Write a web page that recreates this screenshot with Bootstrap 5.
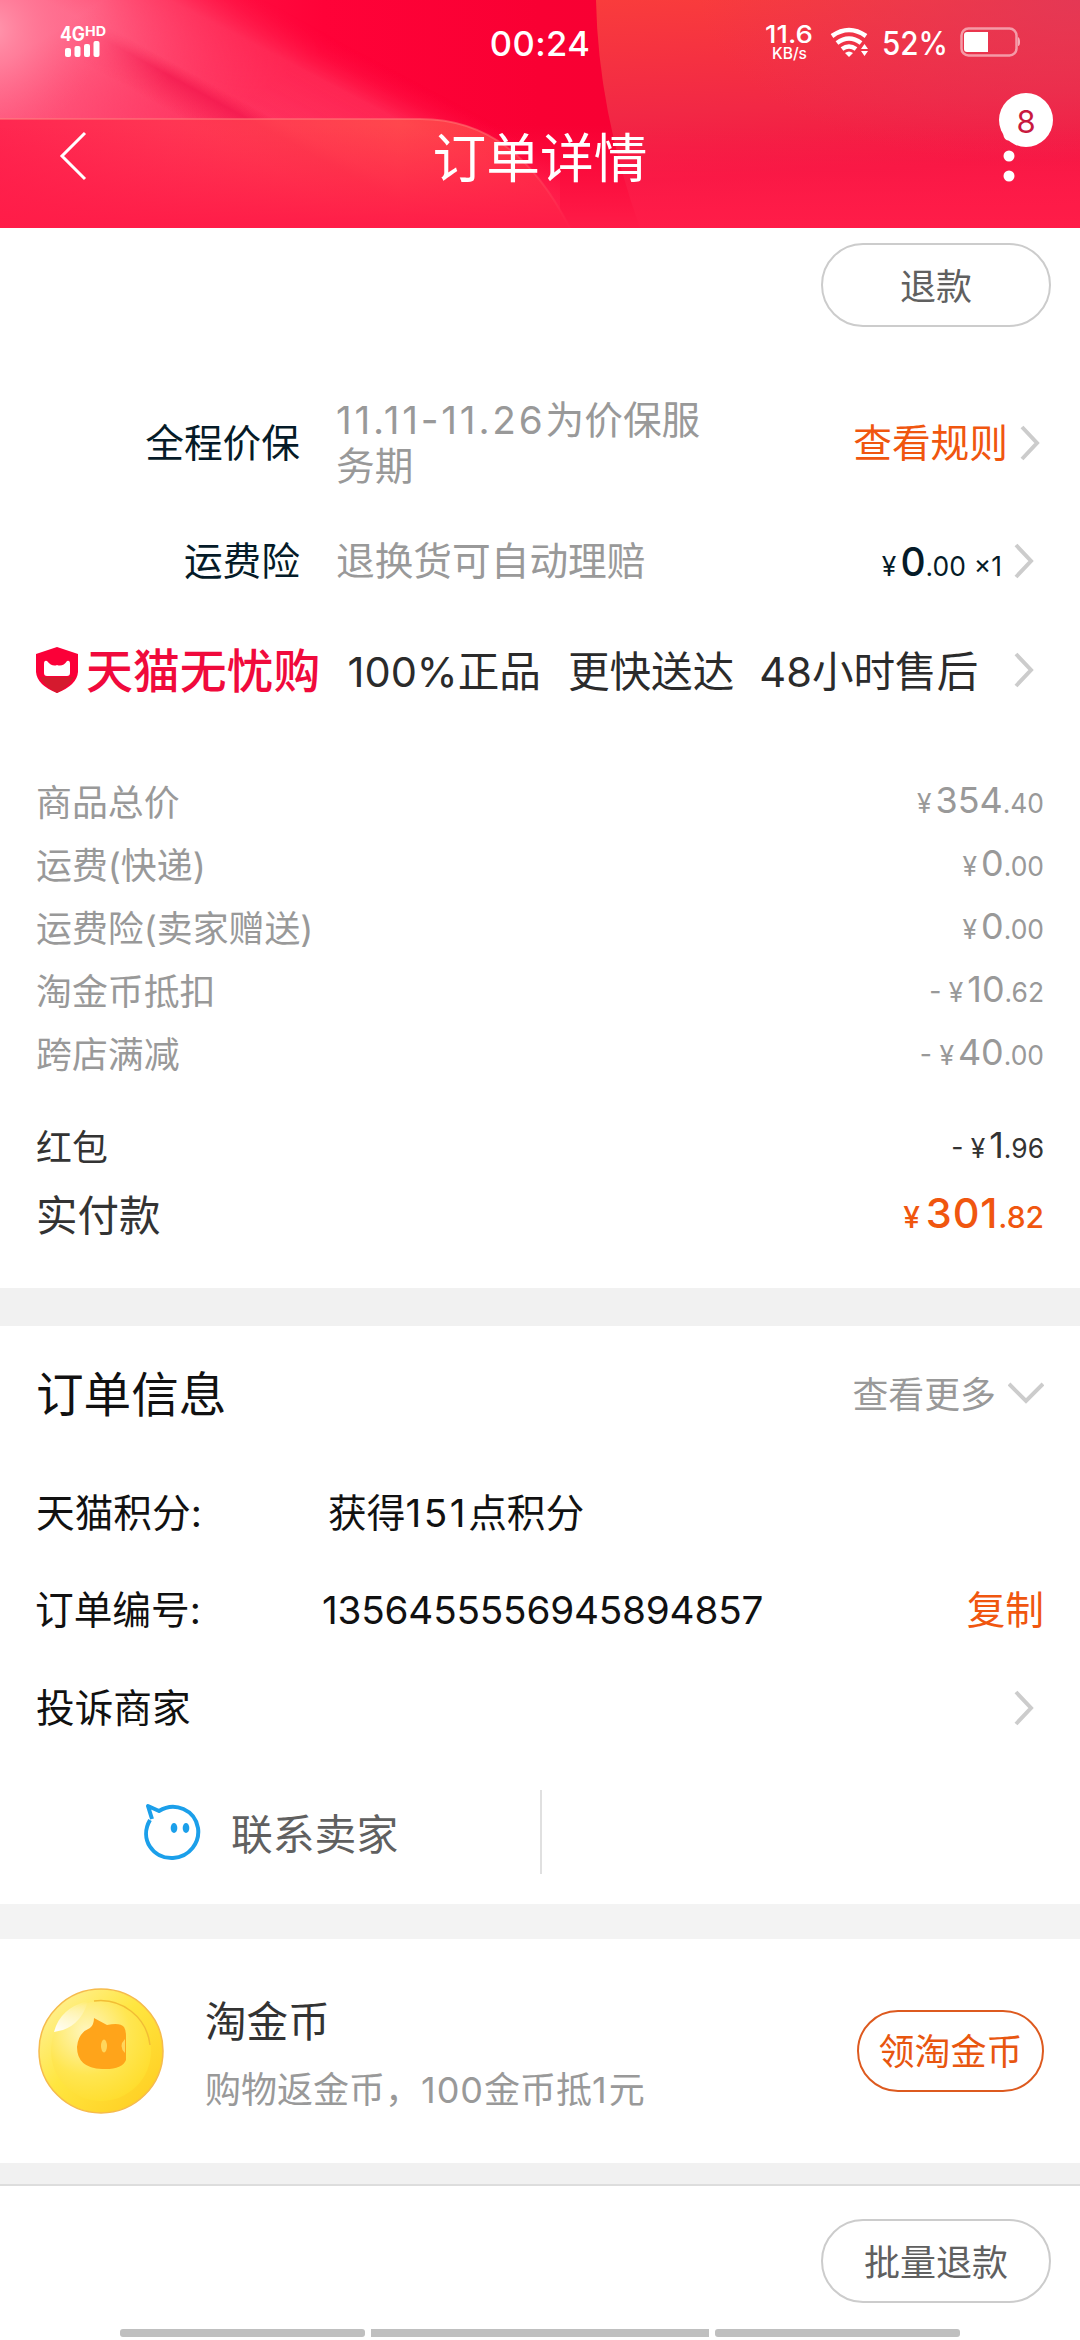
<!DOCTYPE html>
<html lang="zh-CN">
<head>
<meta charset="utf-8">
<meta name="viewport" content="width=device-width, initial-scale=1">
<title>订单详情</title>
<link href="https://cdn.jsdelivr.net/npm/bootstrap@5.3.0/dist/css/bootstrap.min.css" rel="stylesheet">
<style>
  body { font-family: Inter, "Noto Sans CJK SC", sans-serif; font-size: 38.7px; line-height: 1; color: #111; background: #fff; width: 1080px; height: 2340px; overflow: hidden; }
  svg { display: block; flex: none; }
  .hero { height: 228px; color: #fff; }
  .hero-art { position: absolute; inset: 0; }
  .statusline { height: 84px; padding: 0 60px 0 54px; }
  .clock { font-size: 34.5px; font-weight: 500; padding-top: 4px; letter-spacing: .4px; }
  .titlebar { height: 144px; padding: 0 0 0 59px; }
  .page-title { font-size: 53.7px; padding-top: 5px; }
  .more-dots { position: absolute; left: 1001px; top: 124px; }
  .bubble { position: absolute; left: 999px; top: 93px; width: 54px; height: 54px; font-size: 31px; color: #c8193f; background: #fff; padding-top: 2px; }
  .pill { width: 230px; height: 84px; border: 2px solid #ccc; font-size: 36px; color: #606060; padding: 3px 0 0; line-height: 1; }
  .pill-orange { width: 187px; height: 82px; border-color: #dd5a1f; color: #e8560f; }
  .pill-top { padding: 15px 29px 0; }
  .side { padding-left: 36px; padding-right: 36px; }
  .ink { color: #051b28; }
  .gray { color: #999; }
  .orange { color: #f0560f; }
  .svc-row { height: 118px; padding-left: 36px; padding-right: 46px; }
  .svc-label { width: 264px; text-align: right; }
  .svc-text { margin-left: 36px; width: 400px; line-height: 46px; white-space: nowrap; }
  .mall-row { height: 100px; font-size: 41.6px; color: #2b2b2b; }
  .mall-row > div { padding-top: 6px; white-space: nowrap; }
  .mall-row > .mall-name { padding-top: 2px; margin-left: 8px; font-size: 46.9px; font-weight: 500; color: #f00a3c; }
  .s26 { font-size: 26.4px; }
  .s29 { font-size: 30px; }
  .fees { font-size: 35.9px; padding-top: 50px; }
  .fee-row { height: 63px; }
  .fee-row > span:first-child { padding-top: 4px; }
  .fee-row > span:last-child { padding-bottom: 1px; }
  .total-row { height: 72px; color: #333; font-size: 41.5px; }
  .band { background: #f1f1f1; }
  .info-row { height: 97.5px; padding-top: 3px; }
  .info-key { width: 292px; }
</style>
</head>
<body class="d-flex flex-column">

<svg width="0" height="0" class="position-absolute">
  <symbol id="chev" viewBox="0 0 20 36"><path d="M2 2L17 18L2 34" fill="none" stroke="#ccc" stroke-width="4"/></symbol>
</svg>

<header class="hero position-relative flex-shrink-0">
  <svg class="hero-art" width="1080" height="228" viewBox="0 0 1080 228">
    <defs>
      <linearGradient id="base" x1="0" y1="0" x2="1" y2="0"><stop offset="0" stop-color="#ff2452"/><stop offset=".3" stop-color="#ff0238"/><stop offset=".5" stop-color="#f90033"/><stop offset="1" stop-color="#f00034"/></linearGradient>
      <linearGradient id="rightTone" x1="0" y1="0" x2=".12" y2="1"><stop offset="0" stop-color="#f93c3c"/><stop offset=".5" stop-color="#f22845"/><stop offset=".8" stop-color="#f51643"/><stop offset="1" stop-color="#fb1947"/></linearGradient>
      <radialGradient id="cool" gradientUnits="userSpaceOnUse" cx="0" cy="0" r="1" gradientTransform="translate(1080 0) scale(380 170)"><stop offset="0" stop-color="#e0385a" stop-opacity=".8"/><stop offset="1" stop-color="#e0385a" stop-opacity="0"/></radialGradient>
      <linearGradient id="panel" x1="0" y1="0" x2="1" y2="0"><stop offset="0" stop-color="#ff1e48"/><stop offset=".3" stop-color="#ff3450"/><stop offset=".7" stop-color="#ff4c4c"/><stop offset="1" stop-color="#ff3a48"/></linearGradient>
      <linearGradient id="fade" x1="0" y1="0" x2="0" y2="1"><stop offset=".55" stop-color="#ff1a48" stop-opacity="0"/><stop offset=".98" stop-color="#ff1c48" stop-opacity=".95"/></linearGradient>
      <radialGradient id="glow" gradientUnits="userSpaceOnUse" cx="-10" cy="30" r="110"><stop offset="0" stop-color="#ff9ab0"/><stop offset="1" stop-color="#ff5a80" stop-opacity="0"/></radialGradient>
      <linearGradient id="pink" gradientUnits="userSpaceOnUse" x1="253" y1="237" x2="352" y2="47"><stop offset="0" stop-color="#ff4570"/><stop offset=".8" stop-color="#ff2452"/><stop offset="1" stop-color="#ff0238" stop-opacity="0"/></linearGradient>
      <linearGradient id="top" gradientUnits="userSpaceOnUse" x1="120" y1="-10" x2="205" y2="125"><stop offset="0" stop-color="#ff7090" stop-opacity=".95"/><stop offset="1" stop-color="#ff4068" stop-opacity=".1"/></linearGradient>
      <linearGradient id="edge" gradientUnits="userSpaceOnUse" x1="300" y1="135" x2="348" y2="44"><stop offset="0" stop-color="#fff"/><stop offset="1" stop-color="#000"/></linearGradient>
      <mask id="soft"><rect width="560" height="228" fill="url(#edge)"/></mask>
      <linearGradient id="shade" gradientUnits="userSpaceOnUse" x1="165" y1="108" x2="186" y2="70"><stop offset="0" stop-color="#f5164a" stop-opacity="0"/><stop offset=".7" stop-color="#f0124a" stop-opacity=".65"/><stop offset="1" stop-color="#f5164a" stop-opacity="0"/></linearGradient>
      <linearGradient id="streak" gradientUnits="userSpaceOnUse" x1="90" y1="30" x2="250" y2="120"><stop offset="0" stop-color="#000"/><stop offset=".5" stop-color="#fff"/></linearGradient>
      <mask id="streakFade"><rect width="560" height="228" fill="url(#streak)"/></mask>
    </defs>
    <rect width="1080" height="228" fill="url(#base)"/>
    <rect width="560" height="228" fill="url(#pink)"/>
    <rect width="560" height="228" fill="url(#top)" mask="url(#soft)"/>
    <rect width="400" height="228" fill="url(#shade)" mask="url(#streakFade)"/>
    <rect width="180" height="150" fill="url(#glow)"/>
    <path d="M596 0H1080V228H640Q598 110 596 0Z" fill="url(#rightTone)"/>
    <path d="M596 0H1080V228H640Q598 110 596 0Z" fill="url(#cool)"/>
    <path d="M0 119H420C490 119 535 160 570 228H0Z" fill="url(#panel)" fill-opacity=".85"/>
    <path d="M0 119H420C490 119 535 160 570 228" fill="none" stroke="#ff8a80" stroke-opacity=".45" stroke-width="2"/>
    <rect width="1080" height="228" fill="url(#fade)"/>
  </svg>

  <div class="statusline position-relative d-flex align-items-center justify-content-between">
    <svg width="60" height="50" viewBox="-5 -9 60 50" fill="#fff" font-family="Inter">
      <text x="1" y="15" font-weight="700" font-size="19.500" textLength="25" lengthAdjust="spacingAndGlyphs">4G</text>
      <text x="26" y="10" font-weight="700" font-size="13" textLength="21" lengthAdjust="spacingAndGlyphs">HD</text>
      <rect x="6" y="22" width="6" height="9" rx="2"/><rect x="15.500" y="20" width="6" height="11" rx="2"/><rect x="25" y="18" width="6" height="13" rx="2"/><rect x="34.500" y="15" width="6" height="16" rx="2"/>
    </svg>
    <svg width="260" height="84" viewBox="760 0 260 84" fill="#fff" font-family="Inter" font-weight="500">
      <text x="765" y="43" font-size="24.5" textLength="48" lengthAdjust="spacingAndGlyphs">11.6</text>
      <text x="772" y="59" font-size="15.5" textLength="35" lengthAdjust="spacingAndGlyphs">KB/s</text>
      <g fill="none" stroke="#fff" stroke-width="4.6"><path d="M832 36Q849 24 866 36"/><path d="M837 43Q849 34 861 43"/><path d="M842 49Q849 44 856 49"/></g>
      <path d="M845 53Q849 50 853 53L849 57Z"/>
      <path d="M861 49L864.500 44L868 49ZM861 51H868L864.500 56Z"/>
      <text x="882" y="54.500" font-size="32" textLength="66" lengthAdjust="spacingAndGlyphs">52%</text>
      <rect x="961.500" y="28.500" width="55" height="27" rx="7" fill="none" stroke="#fff" stroke-opacity=".5" stroke-width="2.500"/>
      <path d="M967 32H988V52H967Q964 52 964 49V35Q964 32 967 32Z"/>
      <path d="M1018 37Q1020 38 1020 42T1018 46Z" fill-opacity=".6"/>
    </svg>
    <div class="clock position-absolute start-50 translate-middle-x">00:24</div>
  </div>
  <div class="titlebar position-relative d-flex align-items-center">
    <svg width="28" height="50" viewBox="0 0 28 50" fill="none" stroke="#fff" stroke-width="3"><path d="M26 2L3 25L26 48"/></svg>
    <div class="page-title position-absolute start-50 translate-middle-x">订单详情</div>
  </div>
  <svg class="more-dots" width="16" height="60" viewBox="0 0 16 60" fill="#fff"><circle cx="8" cy="11" r="5.500"/><circle cx="8" cy="32" r="5.500"/><circle cx="8" cy="52" r="5.500"/></svg>
  <div class="bubble rounded-circle d-flex align-items-center justify-content-center">8</div>
</header>

<main class="flex-shrink-0">
  <div class="pill-top d-flex justify-content-end">
    <button class="btn pill rounded-pill">退款</button>
  </div>

  <section style="margin-top:57px">
    <div class="svc-row d-flex align-items-center" style="padding-right:40px">
      <div class="svc-label ink">全程价保</div>
      <div class="svc-text gray"><span style="letter-spacing:2.8px">11.11-11.26</span>为价保服<br>务期</div>
      <div class="orange ms-auto">查看规则</div>
      <svg style="margin-left:12px" width="20" height="36"><use href="#chev"/></svg>
    </div>
    <div class="svc-row d-flex align-items-center">
      <div class="svc-label ink">运费险</div>
      <div class="svc-text gray">退换货可自动理赔</div>
      <div class="ink ms-auto text-nowrap d-flex align-items-baseline"><span class="s26">¥</span><span style="font-size:39px;font-weight:500;margin-left:4px">0</span><span class="s26" style="margin-right:8px">.00</span><span class="s26">×1</span></div>
      <svg style="margin-left:12px" width="20" height="36"><use href="#chev"/></svg>
    </div>
    <div class="svc-row mall-row d-flex align-items-center">
      <svg width="42" height="48" viewBox="0 0 42 48"><path d="M21 1L42 8V26Q41 39 21 47Q1 39 0 26V8Z" fill="#fb0038"/><path d="M4 31H38Q33 41 21 47Q9 41 4 31Z" fill="#d51a2e"/><path d="M11 15Q16 21 21 19Q27 21 31 15Q34 14 34 18V27Q34 30 31 30H11Q8 30 8 27V18Q8 14 11 15Z" fill="#fff"/></svg>
      <div class="mall-name">天猫无忧购</div>
      <div style="margin-left:27px">100%正品</div>
      <div style="margin-left:27px">更快送达</div>
      <div style="margin-left:25px">48小时售后</div>
      <svg class="ms-auto" width="20" height="36"><use href="#chev"/></svg>
    </div>
  </section>

  <section class="side fees gray">
    <div class="fee-row d-flex align-items-center justify-content-between"><span>商品总价</span><span><span class="s26 me-1">¥</span>354<span class="s26">.40</span></span></div>
    <div class="fee-row d-flex align-items-center justify-content-between"><span>运费(快递)</span><span><span class="s26 me-1">¥</span>0<span class="s26">.00</span></span></div>
    <div class="fee-row d-flex align-items-center justify-content-between"><span>运费险(卖家赠送)</span><span><span class="s26 me-1">¥</span>0<span class="s26">.00</span></span></div>
    <div class="fee-row d-flex align-items-center justify-content-between"><span>淘金币抵扣</span><span><span class="s26 me-1">- ¥</span>10<span class="s26">.62</span></span></div>
    <div class="fee-row d-flex align-items-center justify-content-between"><span>跨店满减</span><span><span class="s26 me-1">- ¥</span>40<span class="s26">.00</span></span></div>
    <div class="fee-row d-flex align-items-center justify-content-between" style="margin-top:30px;color:#333"><span>红包</span><span><span class="s26 me-1">- ¥</span>1<span class="s26">.96</span></span></div>
    <div class="total-row d-flex align-items-center justify-content-between"><span style="padding-top:5px">实付款</span><span class="orange" style="font-weight:500"><span class="s29" style="margin-right:6px">¥</span><span style="letter-spacing:.8px">301</span><span class="s29">.82</span></span></div>
  </section>
</main>

<div class="band flex-shrink-0" style="height:38px;margin-top:38px"></div>

<section class="side flex-shrink-0">
  <div class="d-flex align-items-center" style="height:134px">
    <h2 class="m-0 fw-normal" style="font-size:47.6px;line-height:1;padding-top:4px">订单信息</h2>
    <span class="gray ms-auto" style="font-size:35.9px;padding-top:5px">查看更多</span>
    <svg style="margin-left:12px" width="36" height="22" viewBox="0 0 36 22" fill="none" stroke="#ccc" stroke-width="4"><path d="M1 2L18 19L35 2"/></svg>
  </div>
  <div class="info-row d-flex align-items-center" style="margin-top:3px"><span class="info-key">天猫积分:</span><span>获得<span style="letter-spacing:2.6px">151</span>点积分</span></div>
  <div class="info-row d-flex align-items-center"><span class="info-key" style="width:287px;margin-left:-1px">订单编号:</span><span style="letter-spacing:-.2px">1356455556945894857</span><span class="orange ms-auto">复制</span></div>
  <div class="info-row d-flex align-items-center"><span>投诉商家</span>
    <svg class="ms-auto" style="margin-right:10px" width="20" height="36"><use href="#chev"/></svg>
  </div>
  <div class="d-flex align-items-center" style="height:84px;width:506px;margin-top:34px;padding-left:107px;border-right:2px solid #e0e0e0;color:#606060;font-size:41.8px">
    <svg width="60" height="60" viewBox="0 0 60 60" fill="none" stroke="#1b9fea" stroke-width="4"><path d="M7 18C-4 37 10 57 30 56C47 55 57 40 55 26C52 8 32-1 16 9L5 4L9 17" stroke-linejoin="round"/><g fill="#1b9fea" stroke="none"><ellipse cx="31" cy="26" rx="3.300" ry="5"/><ellipse cx="43" cy="26" rx="3.300" ry="5"/></g></svg>
    <span style="margin-left:28px;padding-top:8px">联系卖家</span>
  </div>
</section>

<div class="flex-shrink-0" style="height:35px;margin-top:30px;background:#f3f3f3"></div>

<section class="side d-flex align-items-center flex-shrink-0" style="height:224px">
  <svg width="130" height="130" viewBox="0 0 130 130">
    <defs>
      <linearGradient id="coin" x1="0" y1="0" x2="1" y2="1"><stop offset="0" stop-color="#fff3a8"/><stop offset=".45" stop-color="#ffe640"/><stop offset="1" stop-color="#ffca1c"/></linearGradient>
      <radialGradient id="face" cx=".35" cy=".3" r=".8"><stop offset="0" stop-color="#fff6bd"/><stop offset=".55" stop-color="#ffe651"/><stop offset="1" stop-color="#ffdc28"/></radialGradient>
      <linearGradient id="shine" x1="0" y1="1" x2="1" y2="0"><stop offset="0" stop-color="#fff"/><stop offset="1" stop-color="#fff" stop-opacity="0"/></linearGradient>
    </defs>
    <circle cx="65" cy="65" r="62" fill="url(#coin)" stroke="#f6bb4c" stroke-width="1.500"/>
    <circle cx="65" cy="65" r="50" fill="url(#face)"/>
    <path d="M58 15A50 50 0 0 1 114 59" fill="none" stroke="#f2bd35" stroke-width="1.500"/>
    <path d="M18 46Q24 22 52 15Q46 37 27 44Z" fill="url(#shine)"/>
    <path d="M54 42Q58 39 58 32L71 39Q84 36 88 41Q90 44 90 50V74Q86 84 66 83Q41 82 41 61Q42 47 54 42Z" fill="#ffa41a"/>
    <ellipse cx="68" cy="60" rx="3" ry="6.500" fill="#ffd65c"/><path d="M89 53Q82 60 89 67Z" fill="#ffd65c"/>
  </svg>
  <div style="margin-left:39px;padding-top:9px">
    <div style="font-size:41.6px;color:#333">淘金币</div>
    <div class="gray text-nowrap" style="font-size:36px;margin-top:29px">购物返金币，<span style="letter-spacing:1px">100</span>金币抵<span style="letter-spacing:2px">1</span>元</div>
  </div>
  <button class="btn pill pill-orange rounded-pill ms-auto">领淘金币</button>
</section>

<div class="band flex-shrink-0" style="height:23px;border-bottom:2px solid #ddd"></div>

<footer class="flex-shrink-0">
  <div class="d-flex justify-content-end" style="padding:33px 29px 0"><button class="btn pill rounded-pill" style="padding-top:5px">批量退款</button></div>
  <svg style="margin:26px 0 0 120px" width="840" height="8" fill="#bfbfbf"><rect width="245" height="8" rx="3"/><rect x="251" width="338" height="8"/><rect x="595" width="245" height="8" rx="3"/></svg>
</footer>

<script src="https://cdn.jsdelivr.net/npm/bootstrap@5.3.0/dist/js/bootstrap.bundle.min.js"></script>
</body>
</html>
